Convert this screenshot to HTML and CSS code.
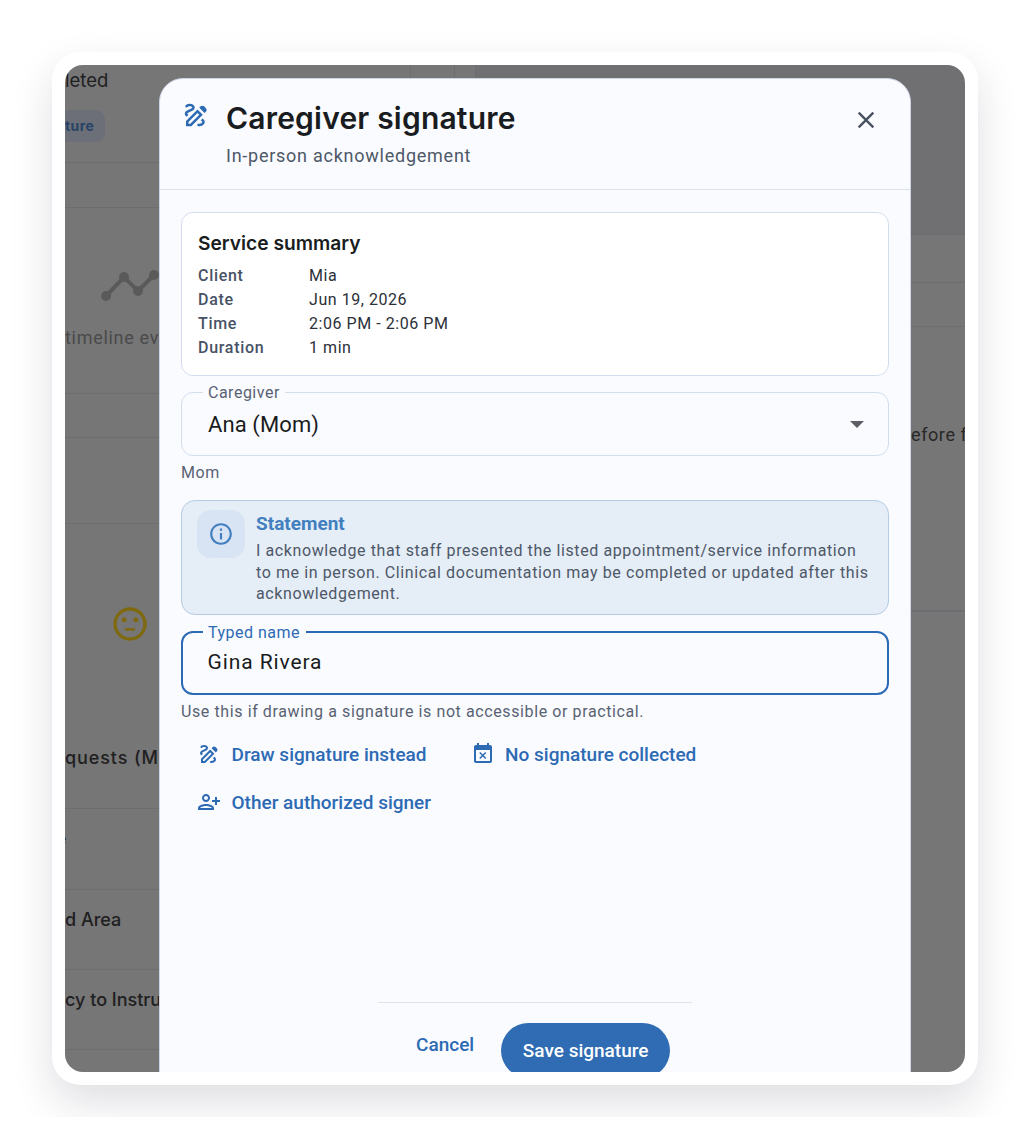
FILE: index.html
```html
<!DOCTYPE html>
<html lang="en">
<head>
	<meta charset="UTF-8">
	<title>Caregiver signature</title>
	<link rel="stylesheet" href="styles.css">
</head>
<body>
<div class="shot">
  <div class="frame">
    <div class="screen">
      <!-- page behind the dialog -->
      <div class="page">
        <div class="col-left">
          <div class="row r1">
            <div class="row-text t1">leted</div>
            <div class="pill">ture</div>
            <i class="vline v1"></i><i class="vline v2"></i>
          </div>
          <div class="row r2"></div>
          <div class="row r3">
            <svg class="timeline" viewBox="0 0 60 40"><path d="M7 33 25 14 39 28 55 12" fill="none" stroke="#b4b4b6" stroke-width="4"/><circle cx="7" cy="33" r="5" fill="#b4b4b6"/><circle cx="25" cy="14" r="5" fill="#b4b4b6"/><circle cx="39" cy="28" r="5" fill="#b4b4b6"/><circle cx="55" cy="12" r="5" fill="#b4b4b6"/></svg>
            <div class="muted">timeline ev</div>
          </div>
          <div class="row r4"></div>
          <div class="row r5"></div>
          <div class="row r6">
            <svg class="face" viewBox="0 0 24 24"><circle cx="12" cy="12" r="9" fill="none" stroke="#ffd21f" stroke-width="2"/><circle cx="8.5" cy="9.5" r="1.5" fill="#ffd21f"/><circle cx="15.5" cy="9.5" r="1.5" fill="#ffd21f"/><rect x="9" y="14.5" width="6" height="1.5" fill="#ffd21f"/></svg>
            <div class="row-text t6">quests (Mia)</div>
          </div>
          <div class="row r7"><div class="row-text small">e</div></div>
          <div class="row r8"><div class="row-text">d Area</div></div>
          <div class="row r9"><div class="row-text">cy to Instruct</div></div>
          <div class="row r10"></div>
        </div>
        <div class="col-right">
          <div class="right-top"></div>
          <div class="right-row h48"></div>
          <div class="right-row h44"></div>
          <div class="right-row h284"><div class="right-text">efore f</div></div>
          <div class="right-row"></div>
        </div>
      </div>
      <div class="scrim"></div>

      <div class="modal">
        <div class="modal-head">
          <svg class="head-icon" viewBox="0 0 24 24"><path d="M18.85 10.39l1.06-1.06c.78-.78.78-2.05 0-2.83L18.5 5.09c-.78-.78-2.05-.78-2.83 0l-1.06 1.06 4.24 4.24zM14.61 11.81L7.41 19H6v-1.41l7.19-7.19 1.42 1.41zM13.19 7.56L4 16.76V21h4.24l9.19-9.19-4.24-4.25zM19 17.5c0 2.19-2.54 3.5-5 3.5-.55 0-1-.45-1-1s.45-1 1-1c1.54 0 3-.73 3-1.5 0-.47-.48-.87-1.23-1.2l1.48-1.48c1.07.63 1.75 1.47 1.75 2.68zM4.58 13.35C3.61 12.79 3 12.06 3 11c0-1.8 1.89-2.63 3.56-3.36C7.59 7.18 9 6.56 9 6c0-.41-.78-1-2-1-1.26 0-1.8.61-1.83.64-.35.41-.98.46-1.4.12-.41-.34-.49-.95-.15-1.38C3.73 4.24 4.76 3 7 3s4 1.32 4 3c0 1.87-1.93 2.72-3.64 3.47C6.42 9.88 5 10.5 5 11c0 .31.43.6 1.07.86l-1.49 1.49z"/></svg>
          <div class="head-text">
            <div class="title">Caregiver signature</div>
            <div class="subtitle">In-person acknowledgement</div>
          </div>
          <svg class="close" viewBox="0 0 24 24"><path d="M19 6.41L17.59 5 12 10.59 6.41 5 5 6.41 10.59 12 5 17.59 6.41 19 12 13.41 17.59 19 19 17.59 13.41 12z"/></svg>
        </div>

        <div class="modal-body">
          <div class="summary">
            <div class="summary-title">Service summary</div>
            <div class="summary-row"><span class="key">Client</span><span>Mia</span></div>
            <div class="summary-row"><span class="key">Date</span><span>Jun 19, 2026</span></div>
            <div class="summary-row"><span class="key">Time</span><span>2:06 PM - 2:06 PM</span></div>
            <div class="summary-row"><span class="key">Duration</span><span>1 min</span></div>
          </div>

          <div class="field select">
            <label class="field-label">Caregiver</label>
            <span class="select-value">Ana (Mom)</span>
            <i class="caret"></i>
          </div>
          <div class="help help-mom">Mom</div>

          <div class="statement">
            <div class="info-box">
              <svg class="info-icon" viewBox="0 0 24 24"><path d="M11 7h2v2h-2zm0 4h2v6h-2zm1-9C6.48 2 2 6.48 2 12s4.48 10 10 10 10-4.48 10-10S17.52 2 12 2zm0 18c-4.41 0-8-3.59-8-8s3.59-8 8-8 8 3.59 8 8-3.59 8-8 8z"/></svg>
            </div>
            <div class="statement-text">
              <div class="statement-title">Statement</div>
              <div class="statement-body">I acknowledge that staff presented the listed appointment/service information to me in person. Clinical documentation may be completed or updated after this acknowledgement.</div>
            </div>
          </div>

          <div class="field typed">
            <label class="field-label blue">Typed name</label>
            <span class="typed-value">Gina Rivera</span>
          </div>
          <div class="help help-typed">Use this if drawing a signature is not accessible or practical.</div>

          <div class="actions">
            <div class="link">
              <svg viewBox="0 0 24 24"><path d="M18.85 10.39l1.06-1.06c.78-.78.78-2.05 0-2.83L18.5 5.09c-.78-.78-2.05-.78-2.83 0l-1.06 1.06 4.24 4.24zM14.61 11.81L7.41 19H6v-1.41l7.19-7.19 1.42 1.41zM13.19 7.56L4 16.76V21h4.24l9.19-9.19-4.24-4.25zM19 17.5c0 2.19-2.54 3.5-5 3.5-.55 0-1-.45-1-1s.45-1 1-1c1.54 0 3-.73 3-1.5 0-.47-.48-.87-1.23-1.2l1.48-1.48c1.07.63 1.75 1.47 1.75 2.68zM4.58 13.35C3.61 12.79 3 12.06 3 11c0-1.8 1.89-2.63 3.56-3.36C7.59 7.18 9 6.56 9 6c0-.41-.78-1-2-1-1.26 0-1.8.61-1.83.64-.35.41-.98.46-1.4.12-.41-.34-.49-.95-.15-1.38C3.73 4.24 4.76 3 7 3s4 1.32 4 3c0 1.87-1.93 2.72-3.64 3.47C6.42 9.88 5 10.5 5 11c0 .31.43.6 1.07.86l-1.49 1.49z"/></svg>
              Draw signature instead
            </div>
            <div class="link">
              <svg viewBox="0 0 24 24"><path d="M9.31 17l2.44-2.44L14.19 17l1.06-1.06-2.44-2.44 2.44-2.44L14.19 10l-2.44 2.44L9.31 10l-1.06 1.06 2.44 2.44-2.44 2.44L9.31 17zM19 3h-1V1h-2v2H8V1H6v2H5c-1.11 0-1.99.9-1.99 2L3 19c0 1.1.89 2 2 2h14c1.1 0 2-.9 2-2V5c0-1.1-.9-2-2-2zm0 16H5V8h14v11z"/></svg>
              No signature collected
            </div>
            <div class="link">
              <svg viewBox="0 0 24 24"><path transform="matrix(-1 0 0 1 24 0)" d="M15 12c2.21 0 4-1.79 4-4s-1.79-4-4-4-4 1.79-4 4 1.79 4 4 4zm0-6c1.1 0 2 .9 2 2s-.9 2-2 2-2-.9-2-2 .9-2 2-2zm0 8c-2.67 0-8 1.34-8 4v2h16v-2c0-2.66-5.33-4-8-4zm-6 4c.22-.72 3.31-2 6-2 2.7 0 5.8 1.29 6 2H9zm-3-3v-3h3v-2H6V7H4v3H1v2h3v3h2z"/></svg>
              Other authorized signer
            </div>
          </div>

          <div class="foot-line"></div>
          <div class="foot">
            <div class="cancel">Cancel</div>
            <div class="save">Save signature</div>
          </div>
        </div>
      </div>
    </div>
  </div>
</div>
</body>
</html>
```

FILE: styles.css
```css
html, body {
  margin: 0;
  background: #fff;
}
.shot {
  height: 1117px;
  padding: 52px 52px 0;
  box-sizing: border-box;
  overflow: hidden;
  font-family: Roboto, "Liberation Sans", sans-serif;
}
.frame {
  width: 926px;
  height: 1033px;
  padding: 13px;
  box-sizing: border-box;
  background: #fff;
  border-radius: 28px;
  box-shadow: 0 18px 42px rgba(30, 30, 60, 0.14);
}
.screen {
  width: 900px;
  height: 1007px;
  position: relative;
  overflow: hidden;
  border-radius: 18px;
}

/* page behind */
.page {
  display: flex;
  height: 100%;
  background: #ececec;
  font-family: Inter, Roboto, sans-serif;
  color: #404042;
}
.col-left {
  width: 411px;
  flex: none;
  box-sizing: border-box;
  border-right: 1px solid #d8d8e2;
}
.col-right {
  flex: 1;
  min-width: 0;
}
.row {
  box-sizing: border-box;
  border-bottom: 1px solid #d8d8e2;
  position: relative;
  white-space: nowrap;
}
.r1 { height: 98px; }
.r2 { height: 45px; }
.r3 { height: 186px; padding-top: 55px; }
.r4 { height: 44px; }
.r5 { height: 86px; }
.r6 { height: 285px; padding-top: 80px; }
.r7 { height: 81px; }
.r8 { height: 80px; }
.r9 { height: 80px; }
.r10 { height: 22px; border: 0; }
.vline {
  position: absolute;
  top: 0;
  height: 13px;
  width: 1px;
  background: #d8d8e2;
}
.v1 { left: 345px; }
.v2 { left: 389px; }
.row-text {
  font-size: 18px;
  font-weight: 500;
  line-height: 22px;
  padding-top: 19px;
}
.t1 {
  padding-top: 4px;
  font-weight: 400;
  font-size: 18.5px;
}
.small {
  font-size: 14px;
  margin-left: -7px;
}
.pill {
  width: 40px;
  margin-top: 19px;
  height: 32px;
  border-radius: 0 9px 9px 0;
  background: #d8dfee;
  color: #4f86d0;
  font-size: 14px;
  font-weight: 700;
  line-height: 32px;
  letter-spacing: .4px;
}
.timeline {
  display: block;
  width: 60px;
  height: 40px;
  margin-left: 34px;
}
.muted {
  margin-top: 24px;
  font-size: 18px;
  color: #949494;
  font-family: Roboto, sans-serif;
  letter-spacing: .7px;
}
.face {
  display: block;
  width: 40px;
  height: 40px;
  margin-left: 45px;
}
.t6 {
  padding-top: 103px;
  letter-spacing: .9px;
}
.right-top {
  height: 170px;
  background: #e0e1e5;
  border-bottom: 1px solid #d8d8e2;
  box-sizing: border-box;
}
.right-row {
  box-sizing: border-box;
  border-bottom: 1px solid #d8d8e2;
}
.h48 { height: 48px; }
.h44 { height: 44px; }
.h284 { height: 284px; padding: 97px 0 0 435px; }
.right-text {
  font-family: Roboto, sans-serif;
  font-size: 18px;
  line-height: 22px;
  white-space: nowrap;
  color: #505052;
  letter-spacing: .6px;
}
.scrim {
  position: absolute;
  inset: 0;
  background: rgba(0, 0, 0, 0.5);
}

/* dialog */
.modal {
  position: absolute;
  left: 94px;
  top: 13px;
  width: 752px;
  height: 1040px;
  box-sizing: border-box;
  background: #fafbff;
  border: 1px solid #cdd5e6;
  border-radius: 24px;
}
.modal-head {
  height: 111px;
  box-sizing: border-box;
  display: flex;
  border-bottom: 1px solid #dce1ee;
  padding: 21px 30px 0 21px;
}
.head-icon {
  width: 30px;
  height: 30px;
  fill: #2d6ab4;
  flex: none;
}
.head-text {
  flex: 1;
  padding-left: 15px;
}
.title {
  font-family: Inter, sans-serif;
  font-size: 30px;
  font-weight: 600;
  line-height: 36px;
  letter-spacing: .2px;
  color: #191c20;
}
.subtitle {
  margin-top: 8px;
  font-size: 18px;
  line-height: 24px;
  letter-spacing: .75px;
  color: #4d5868;
}
.close {
  width: 28px;
  height: 28px;
  margin-top: 6px;
  fill: #475160;
  flex: none;
}
.modal-body {
  padding: 22px 21px 0;
}
.summary {
  height: 164px;
  box-sizing: border-box;
  padding: 18px 16px 0;
  background: #fff;
  border: 1.5px solid #d3ddee;
  border-radius: 12px;
}
.summary-title {
  font-family: Inter, sans-serif;
  font-size: 19.2px;
  font-weight: 600;
  line-height: 24px;
  color: #191c20;
  margin-bottom: 9px;
}
.summary-row {
  display: flex;
  font-size: 16px;
  line-height: 24px;
  letter-spacing: .55px;
  color: #2b3038;
}
.key {
  width: 111px;
  flex: none;
  font-weight: 500;
  letter-spacing: .7px;
  color: #475264;
}
.field {
  position: relative;
  box-sizing: border-box;
  display: flex;
  align-items: center;
  padding-left: 26px;
  border-radius: 12px;
}
.field-label {
  position: absolute;
  left: 20.5px;
  top: -9px;
  padding: 0 5.5px;
  font-size: 16px;
  line-height: 18px;
  letter-spacing: .5px;
  color: #586272;
  background: #fafbff;
}
.blue {
  color: #2d6ab4;
}
.select {
  height: 64px;
  margin-top: 16px;
  border: 1.5px solid #d3ddee;
}
.select-value {
  font-size: 22px;
  letter-spacing: .1px;
  color: #191c20;
}
.caret {
  position: absolute;
  right: 24px;
  top: 28px;
  width: 0;
  height: 0;
  border-left: 7px solid transparent;
  border-right: 7px solid transparent;
  border-top: 7px solid #5c5f66;
}
.help {
  font-size: 16px;
  line-height: 18px;
  letter-spacing: .6px;
  color: #586272;
}
.help-mom {
  margin-top: 8px;
}
.statement {
  height: 115px;
  box-sizing: border-box;
  margin-top: 18px;
  display: flex;
  padding: 9px 15px 0;
  background: #e5edf6;
  border: 1.5px solid #b5cce4;
  border-radius: 14px;
}
.info-box {
  width: 48px;
  height: 48px;
  flex: none;
  display: flex;
  align-items: center;
  justify-content: center;
  background: #d8e4f3;
  border-radius: 14px;
}
.info-icon {
  width: 26px;
  height: 26px;
  fill: #427fbf;
}
.statement-text {
  padding: 2px 4px 0 11px;
}
.statement-title {
  font-size: 19px;
  font-weight: 700;
  line-height: 24px;
  color: #427fbf;
}
.statement-body {
  margin-top: 4px;
  font-size: 16px;
  line-height: 21.5px;
  letter-spacing: .6px;
  color: #4d5868;
}
.typed {
  height: 64px;
  margin-top: 16px;
  padding-left: 24.5px;
  border: 2.5px solid #2d6ab4;
}
.typed .field-label {
  left: 19.5px;
  top: -9.5px;
}
.typed-value {
  font-size: 21px;
  letter-spacing: .9px;
  color: #191c20;
  margin-top: -2px;
}
.help-typed {
  margin-top: 8px;
}
.actions {
  display: flex;
  flex-wrap: wrap;
  column-gap: 44px;
  row-gap: 8px;
  margin-top: 13px;
  padding-left: 16px;
  width: 560px;
}
.link {
  height: 40px;
  display: flex;
  align-items: center;
  gap: 10.5px;
  font-size: 19px;
  font-weight: 500;
  color: #2d6ab4;
}
.link svg {
  width: 24px;
  height: 24px;
  fill: #2d6ab4;
  flex: none;
}
.foot-line {
  width: 314px;
  height: 1px;
  margin: 180px auto 0;
  background: #dce3ee;
}
.foot {
  display: flex;
  padding: 20px 0 0 235px;
}
.cancel {
  margin-top: 10px;
  font-size: 19px;
  font-weight: 500;
  line-height: 24px;
  color: #2d6ab4;
}
.save {
  width: 169px;
  height: 55px;
  margin-left: 27px;
  border-radius: 28px;
  background: #2f6cb3;
  color: #fff;
  font-size: 19px;
  font-weight: 500;
  line-height: 55px;
  text-align: center;
}
```
